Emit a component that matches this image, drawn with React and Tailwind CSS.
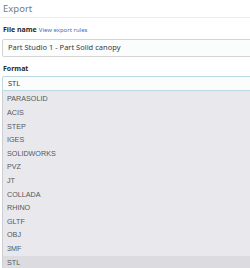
export default function App() {
  const formats = [
    "PARASOLID",
    "ACIS",
    "STEP",
    "IGES",
    "SOLIDWORKS",
    "PVZ",
    "JT",
    "COLLADA",
    "RHINO",
    "GLTF",
    "OBJ",
    "3MF",
    "STL",
  ];
  const selected = "STL";

  return (
    <div className="w-[250px] h-[268px] overflow-hidden bg-white font-['Noto_Sans',sans-serif]">
      <div className="h-[18px] pl-[3px] pt-[1px] border-b border-[#ececec] text-[9.5px] leading-[15px] text-[#7a7a7a]">
        Export
      </div>

      <div className="pl-[2px] pt-[6px]">
        <div className="flex items-baseline gap-[2px] pl-[1px] leading-[11px]">
          <span className="text-[7px] font-bold text-[#2b2b2b]">File name</span>
          <span className="text-[6px] text-[#3f6fb3]">View export rules</span>
        </div>
        <div className="mt-[3px] w-[260px] h-[18px] flex items-center pl-[5px] border border-[#d4d4d4] rounded-[2px] bg-[#fbfcfc] text-[7.5px] text-[#3a3a3a]">
          Part Studio 1 - Part Solid canopy
        </div>

        <div className="mt-[6px] pl-[1px] leading-[11px] text-[7px] font-bold text-[#2b2b2b]">
          Format
        </div>
        <div className="mt-[2px] w-[260px] h-[15px] flex items-center pl-[5px] border border-[#b9d9e3] rounded-t-[2px] bg-[#fbfdfd] text-[7.5px] text-[#3a3a3a]">
          STL
        </div>

        <ul className="w-[260px] pt-[2px] border-l border-[#cfcfd3] bg-[#e9e9ed] font-['Liberation_Sans',Arial,sans-serif] text-[7.2px] text-[#575757]">
          {formats.map((f) => (
            <li
              key={f}
              className={`h-[13.6px] flex items-center pl-[4px] ${f === selected ? "bg-[#dcdce0]" : ""}`}
            >
              {f}
            </li>
          ))}
        </ul>
      </div>
    </div>
  );
}
